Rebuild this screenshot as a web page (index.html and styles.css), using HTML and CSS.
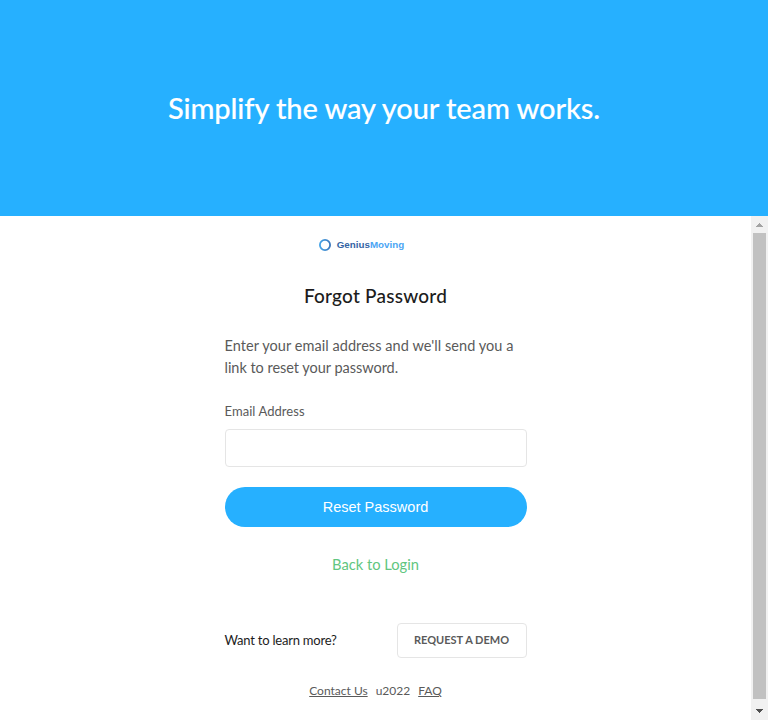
FILE: index.html
```html
<!DOCTYPE html>
<html lang="en">
<head>
<meta charset="utf-8">
<title>Forgot Password</title>
<link rel="stylesheet" href="styles.css">
</head>
<body>
<header class="hero"><h1 class="hero-title">Simplify the way your team works.</h1></header>
<div class="pane">
  <main class="content">
    <div class="logo">
      <svg class="logo-mark" viewBox="0 0 12 12" width="12" height="12">
        <defs><linearGradient id="ring" x1="0" x2="1" y1="0" y2="0"><stop offset="0" stop-color="#45a3e6"/><stop offset="1" stop-color="#3b78bd"/></linearGradient></defs>
        <circle cx="6" cy="6" r="5.1" fill="none" stroke="url(#ring)" stroke-width="1.8"/>
      </svg>
      <span class="logo-text">Genius<span class="logo-accent">Moving</span></span>
    </div>
    <h2 class="title">Forgot Password</h2>
    <p class="intro">Enter your email address and we'll send you a<br><span class="intro-end">link to reset your password.</span></p>
    <form class="form">
      <label class="label" for="email">Email Address</label>
      <input class="input" id="email" type="email">
      <button class="submit" type="button">Reset Password</button>
    </form>
    <a class="back">Back to Login</a>
    <div class="more">
      <span class="more-text">Want to learn more?</span>
      <a class="demo">REQUEST A DEMO</a>
    </div>
    <footer class="footer"><a class="link contact">Contact Us</a><span class="sep">u2022</span><a class="link faq">FAQ</a></footer>
  </main>
  <div class="scrollbar">
    <svg class="arrow" width="17" height="17" viewBox="0 0 17 17" shape-rendering="crispEdges"><path fill="#a3a3a3" d="M8 7h1v1h1v1h1v1h1v1H5v-1h1V9h1V8h1z"/></svg>
    <div class="thumb"></div>
    <svg class="arrow" width="17" height="17" viewBox="0 0 17 17" shape-rendering="crispEdges"><path fill="#505050" d="M5 6h7v1h-1v1h-1v1H9v1H8V9H7V8H6V7H5z"/></svg>
  </div>
</div>
</body>
</html>
```
FILE: styles.css
```css
* { box-sizing: border-box; }
body { margin: 0; height: 720px; overflow: hidden; background: #fff; color: #1c1c1c; font-family: Lato, "Open Sans", sans-serif; }
h1, h2, p { margin: 0; }
.hero { height: 216px; background: #26b0ff; display: flex; align-items: center; justify-content: center; }
.hero-title { color: #fff; font-size: 29px; font-weight: 500; line-height: 36px; letter-spacing: -.09px; -webkit-text-stroke: .15px; white-space: nowrap; }
.pane { display: flex; height: 504px; }
.content { flex: 1; display: flex; flex-direction: column; align-items: center; padding-top: 19px; white-space: nowrap; }
.logo { display: flex; align-items: center; height: 20px; gap: 6px; margin-right: 28px; }
.logo-text { font: bold 9.8px/20px "Liberation Sans", sans-serif; color: #3564a5; }
.logo-accent { color: #4ba5f4; }
.title { margin-top: 29px; font-size: 19px; font-weight: 500; line-height: 24px; letter-spacing: .23px; }
.intro { width: 302px; margin-top: 27px; color: #5a5a5a; font-size: 14.5px; line-height: 22px; letter-spacing: .06px; }
.intro-end { letter-spacing: -.03px; }
.form { width: 302px; margin-top: 22px; display: flex; flex-direction: column; }
.label { color: #5a5a5a; font-size: 13px; line-height: 20px; letter-spacing: .06px; }
.input { height: 38px; margin-top: 8px; border: 1px solid #e5e5e5; border-radius: 4px; background: #fff; outline: none; }
.submit { height: 40px; margin-top: 20px; border: 0; border-radius: 20px; background: #26b0ff; color: #fff; font: 14.5px "Liberation Sans", sans-serif; }
.back { margin-top: 27px; color: #61c680; font-size: 14.7px; line-height: 20px; }
.more { width: 302px; margin-top: 49px; display: flex; align-items: center; justify-content: space-between; }
.more-text { font-size: 13px; letter-spacing: -.22px; padding-bottom: 2px; }
.demo { width: 130px; height: 35px; border: 1px solid #e5e5e5; border-radius: 4px; color: #5a5a5a; font-size: 11px; font-weight: 700; line-height: 32px; text-align: center; }
.footer { display: flex; gap: 8px; margin-top: 23px; color: #5a5a5a; font-size: 12px; line-height: 20px; }
.link { text-decoration: underline; }
.scrollbar { width: 17px; background: #f1f1f1; display: flex; flex-direction: column; }
.arrow { display: block; flex: none; }
.thumb { width: 13px; height: 466px; margin: 0 2px 4px; background: #c1c1c1; }
```
